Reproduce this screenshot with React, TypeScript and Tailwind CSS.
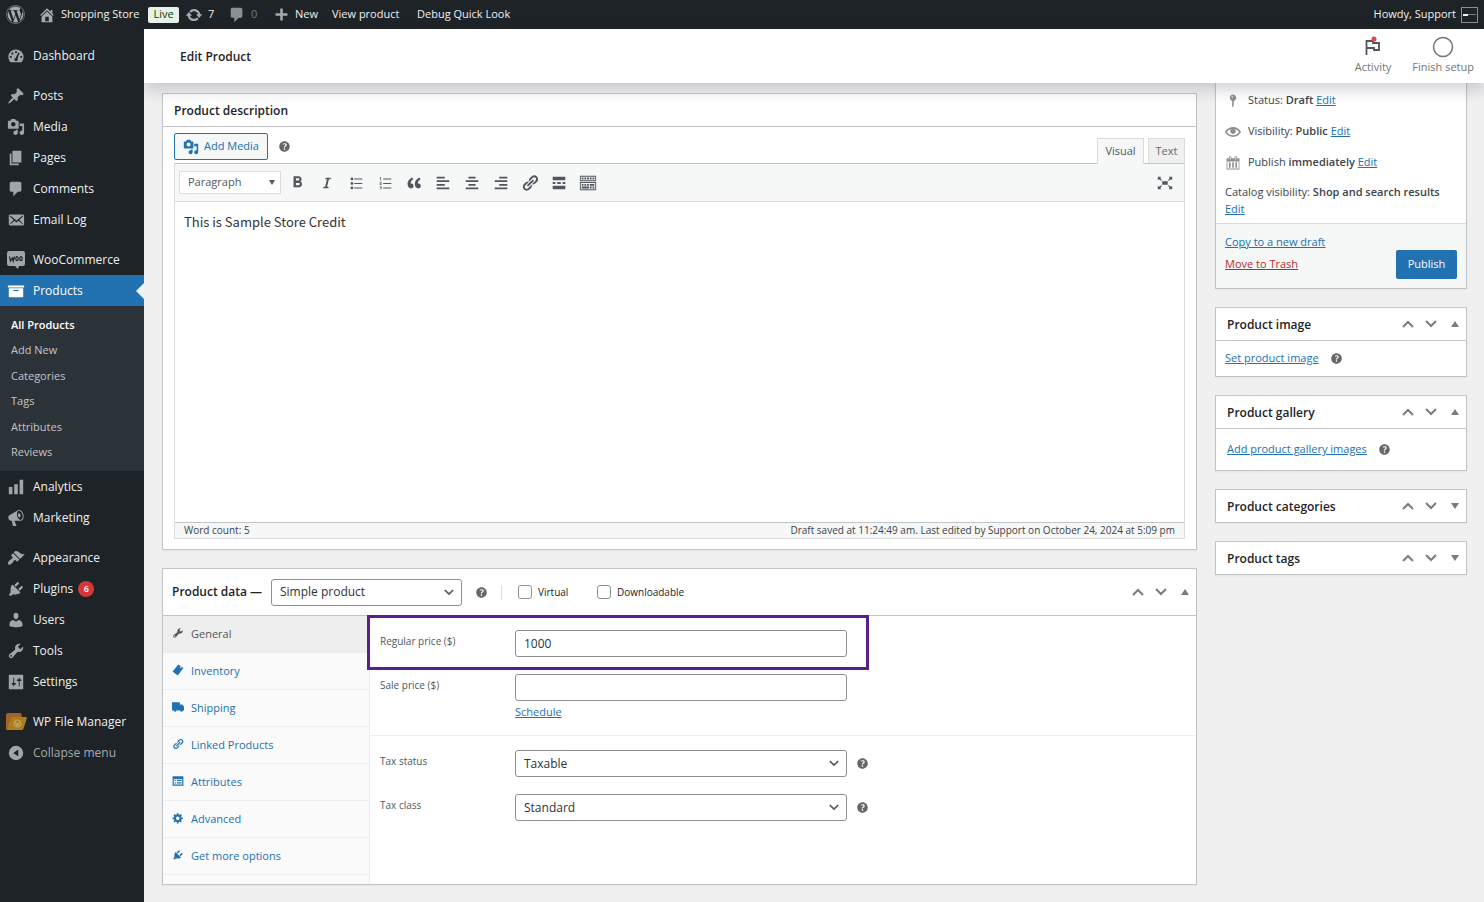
// App.tsx
import { FC, ReactNode, useState } from "react";
import clsx from "clsx";
import { FaWordpress, FaItalic } from "react-icons/fa";
import { MdFormatBold } from "react-icons/md";

const icons = {
  home: "M16 8.5l1.53 1.53-1.06 1.06L10 4.6l-6.47 6.49-1.06-1.06L10 2.5l4 4v-2h2v4zm-6-2.46l6 5.99V18H4v-5.97zM12 17v-5H8v5h4z",
  update:
    "M10.2 3.28c3.53 0 6.43 2.61 6.92 6h2.08l-3.5 4-3.5-4h2.32c-.45-1.97-2.21-3.45-4.32-3.45-1.45 0-2.73.71-3.54 1.78L4.95 5.66C6.23 4.2 8.11 3.28 10.2 3.28zm-.4 13.44c-3.52 0-6.43-2.61-6.92-6H.8l3.5-4c1.17 1.33 2.33 2.67 3.5 4H5.48c.45 1.97 2.21 3.45 4.32 3.45 1.45 0 2.73-.71 3.54-1.78l1.71 1.95c-1.28 1.46-3.15 2.38-5.25 2.38z",
  plus: "M17 8.5v3h-5.5V17h-3v-5.5H3v-3h5.5V3h3v5.5H17z",
  dashboard:
    "M3.76 17h12.48c1.34-1.67 2.21-3.84 2.21-6.1C18.45 6.21 14.67 2.8 10 2.8S1.55 6.21 1.55 10.9c0 2.26.87 4.43 2.21 6.1zM9 4.6h2v2H9zM5 6.2h2v2H5zM3.2 10h2v2h-2zM14.8 10h2v2h-2zM12.6 6l1.3.6-2.2 6.2c.5.9.2 2.2-.8 2.7-1.1.5-2.3 0-2.6-1.1-.3-1.1.3-2.1 1.3-2.3z",
  post: "M10.44 3.02l1.82-1.82 6.36 6.35-1.83 1.82c-1.05-.68-2.48-.57-3.41.36l-.75.75c-.92.93-1.04 2.35-.35 3.41l-1.83 1.82-2.41-2.41-2.8 2.79c-.42.42-3.38 2.71-3.8 2.29s1.86-3.39 2.28-3.81l2.79-2.79L4.1 9.36l1.83-1.82c1.05.69 2.48.57 3.4-.36l.75-.75c.93-.92 1.05-2.35.36-3.41z",
  media:
    "M13 11V4c0-.55-.45-1-1-1h-1.67L9 1H5L3.67 3H2c-.55 0-1 .45-1 1v7c0 .55.45 1 1 1h10c.55 0 1-.45 1-1zM7 4.5c1.38 0 2.5 1.12 2.5 2.5S8.38 9.5 7 9.5 4.5 8.38 4.5 7 5.62 4.5 7 4.5zM14 6h5v10.5c0 1.38-1.12 2.5-2.5 2.5S14 17.88 14 16.5s1.12-2.5 2.5-2.5c.17 0 .34.02.5.05V9h-3V6zm-4 8.05V13h2v3.5c0 1.38-1.12 2.5-2.5 2.5S7 17.88 7 16.5 8.12 14 9.5 14c.17 0 .34.02.5.05z",
  page: "M6 15V2h10v13H6zm-1 1h8v2H3V5h2v11z",
  comment:
    "M5 2h9c1.1 0 2 .9 2 2v7c0 1.1-.9 2-2 2h-2l-5 5v-5H5c-1.1 0-2-.9-2-2V4c0-1.1.9-2 2-2z",
  email:
    "M19 14.5v-9c0-.83-.67-1.5-1.5-1.5H3.49c-.83 0-1.5.67-1.5 1.5v9c0 .83.67 1.5 1.5 1.5H17.5c.83 0 1.5-.67 1.5-1.5zm-1.31-9.11c.33.33.15.67-.03.84L13.6 9.95l3.9 4.06c.12.14.2.36.06.51-.13.16-.43.15-.56.05l-4.37-3.73-2.14 1.95-2.13-1.95-4.37 3.73c-.13.1-.43.11-.56-.05-.14-.15-.06-.37.06-.51l3.9-4.06-4.06-3.72c-.18-.17-.36-.51-.03-.84s.67-.17.95.07l6.24 5.04 6.25-5.04c.28-.24.62-.4.95-.07z",
  archive: "M19 4v2H1V4h18zM2 7h16v10H2V7zm11 3V9H7v1h6z",
  chart: "M18 18V2h-4v16h4zm-6 0V7H8v11h4zm-6 0v-8H2v8h4z",
  megaphone:
    "M18.15 5.94c.46 1.62.38 3.22-.02 4.48-.42 1.28-1.26 2.18-2.3 2.48-.16.06-.26.06-.4.06-.06.02-.12.02-.18.02-.06.02-.14.02-.22.02h-6.8l2.22 5.5c.02.14-.06.26-.14.34-.08.1-.24.16-.34.16H6.95c-.1 0-.26-.06-.34-.16-.08-.08-.16-.2-.14-.34l-1-5.5H4.25l-.02-.02c-.5.06-1.08-.18-1.54-.62s-.88-1.08-1.06-1.88c-.24-.8-.2-1.56-.02-2.2.18-.62.58-1.08 1.06-1.3l.02-.02 9-5.4c.1-.06.18-.1.24-.16.06-.04.14-.08.24-.12.16-.08.28-.12.5-.18 1.04-.3 2.24.1 3.22.98s1.84 2.24 2.26 3.86zm-2.58 5.98h-.02c.4-.1.74-.34 1.04-.7.58-.7.86-1.76.86-3.04 0-.64-.1-1.3-.28-1.98-.34-1.36-1.02-2.5-1.78-3.24s-1.68-1.1-2.46-.88c-.82.22-1.4.96-1.7 2-.32 1.04-.28 2.36.06 3.72.38 1.36 1 2.5 1.8 3.24.78.74 1.62 1.1 2.48.88zm-2.54-7.08c.22-.04.42-.02.62.04.38.16.76.48 1.02 1s.42 1.2.42 1.78c0 .3-.04.56-.12.8-.18.48-.44.84-.86.94-.34.1-.8-.06-1.14-.4s-.64-.86-.78-1.5c-.18-.62-.12-1.24.02-1.72s.48-.84.82-.94z",
  appearance:
    "M14.48 11.06L7.41 3.99l1.5-1.5c.5-.56 2.3-.47 3.51.32 1.21.8 1.43 1.28 2.91 2.1 1.18.64 2.45 1.26 4.45.85zm-.71.71L6.7 4.7 4.93 6.47c-.39.39-.39 1.02 0 1.41l1.06 1.06c.39.39.39 1.03 0 1.42-.6.6-1.43 1.11-2.21 1.69-.35.26-.7.53-1.01.84C1.43 14.23.4 16.08 1.4 17.07c.99 1 2.84-.03 4.18-1.36.31-.31.58-.66.85-1.02.57-.78 1.08-1.61 1.69-2.21.39-.39 1.02-.39 1.41 0l1.06 1.06c.39.39 1.02.39 1.41 0z",
  plugins:
    "M13.11 4.36L9.87 7.6 8 5.73l3.24-3.24c.35-.34 1.05-.2 1.56.32.52.51.66 1.21.31 1.55zm-8 1.77l.91-1.12 9.01 9.01-1.19.84c-.71.71-2.63 1.16-3.82 1.16H6.14L4.9 17.26c-.59.59-1.54.59-2.12 0-.59-.58-.59-1.53 0-2.12l1.24-1.24v-3.88c0-1.13.4-3.19 1.09-3.89zm7.26 3.97l3.24-3.24c.34-.35 1.04-.21 1.55.31.52.51.66 1.21.31 1.55l-3.24 3.25z",
  users:
    "M10 9.25c-2.27 0-2.73-3.44-2.73-3.44C7 4.02 7.82 2 9.97 2c2.16 0 2.98 2.02 2.71 3.81 0 0-.41 3.44-2.68 3.44zm0 2.57L12.72 10c2.39 0 4.52 2.33 4.52 4.53v2.49s-3.65 1.13-7.24 1.13c-3.65 0-7.24-1.13-7.24-1.13v-2.49c0-2.25 1.94-4.48 4.47-4.48z",
  tools:
    "M16.68 9.77c-1.34 1.34-3.3 1.67-4.95.99l-5.41 6.52c-.99.99-2.59.99-3.58 0s-.99-2.59 0-3.57l6.52-5.42c-.68-1.65-.35-3.61.99-4.95 1.28-1.28 3.12-1.62 4.72-1.06l-2.89 2.89 2.82 2.82 2.86-2.87c.53 1.58.18 3.39-1.08 4.65zM3.81 16.21c.4.39 1.04.39 1.43 0 .4-.4.4-1.04 0-1.43-.39-.4-1.03-.4-1.43 0-.39.39-.39 1.03 0 1.43z",
  settings:
    "M18 18V2H2v16h16zM8 11h1c.55 0 1 .45 1 1s-.45 1-1 1H8v1.5c0 .28-.22.5-.5.5s-.5-.22-.5-.5V13H6c-.55 0-1-.45-1-1s.45-1 1-1h1V5.5c0-.28.22-.5.5-.5s.5.22.5.5V11zm5-2h-1c-.55 0-1-.45-1-1s.45-1 1-1h1V5.5c0-.28.22-.5.5-.5s.5.22.5.5V7h1c.55 0 1 .45 1 1s-.45 1-1 1h-1v5.5c0 .28-.22.5-.5.5s-.5-.22-.5-.5V9z",
  collapse: "M10 2a8 8 0 100 16 8 8 0 000-16zM12.5 6v8L7 10z",
  help: "M17 10c0-3.87-3.14-7-7-7-3.87 0-7 3.13-7 7s3.13 7 7 7c3.86 0 7-3.13 7-7zm-6.3 1.48H9.14v-.43c0-.38.08-.7.24-.98s.46-.57.88-.89c.41-.29.68-.53.81-.71.14-.18.2-.39.2-.62 0-.25-.09-.44-.28-.58-.19-.13-.45-.19-.79-.19-.58 0-1.25.19-2 .57l-.64-1.28c.87-.49 1.8-.74 2.77-.74.81 0 1.45.2 1.92.58.48.39.71.91.71 1.55 0 .43-.09.8-.29 1.11-.19.32-.57.67-1.11 1.06-.38.28-.61.49-.71.63-.1.15-.15.34-.15.57v.35zm-1.47 2.74c-.18-.17-.27-.42-.27-.73 0-.33.08-.58.26-.75s.43-.25.77-.25c.32 0 .57.09.75.26s.27.42.27.74c0 .3-.09.55-.27.72-.18.18-.43.27-.75.27-.33 0-.58-.09-.76-.26z",
  link: "M17.74 2.76c1.68 1.69 1.68 4.41 0 6.1l-1.53 1.52c-1.12 1.12-2.7 1.47-4.14 1.09l2.62-2.61.76-.77.76-.76c.84-.84.84-2.2 0-3.04-.84-.85-2.2-.85-3.04 0l-.77.76-3.38 3.38c-.37-1.44-.02-3.02 1.1-4.14l1.52-1.53c1.69-1.68 4.42-1.68 6.1 0zM8.59 13.43l5.34-5.34c.42-.42.42-1.1 0-1.52-.44-.43-1.13-.39-1.53 0l-5.33 5.34c-.42.42-.42 1.1 0 1.52.44.43 1.13.39 1.52 0zm-.76 2.29l4.14-4.15c.38 1.44.03 3.02-1.09 4.14l-1.52 1.53c-1.69 1.68-4.41 1.68-6.1 0-1.68-1.68-1.68-4.42 0-6.1l1.53-1.52c1.12-1.12 2.7-1.47 4.14-1.1l-4.14 4.15c-.85.84-.85 2.2 0 3.05.84.84 2.2.84 3.04 0z",
  ul: "M5.5 7C4.67 7 4 6.33 4 5.5 4 4.68 4.67 4 5.5 4 6.32 4 7 4.68 7 5.5 7 6.33 6.32 7 5.5 7zM8 5h9v1H8V5zm-2.5 7c-.83 0-1.5-.67-1.5-1.5C4 9.68 4.67 9 5.5 9c.82 0 1.5.68 1.5 1.5 0 .83-.68 1.5-1.5 1.5zM8 10h9v1H8v-1zm-2.5 7c-.83 0-1.5-.67-1.5-1.5 0-.82.67-1.5 1.5-1.5.82 0 1.5.68 1.5 1.5 0 .83-.68 1.5-1.5 1.5zM8 15h9v1H8v-1z",
  ol: "M4.2 3.5h1.3V7H4.7V4.3H4zM8 5h9v1H8zM4 8.5h2.2v1.7l-1.2 1h1.2v.8H4v-1.1l1.4-1.2v-.4H4zM8 10h9v1H8zM4 13.5h2.2V17H4v-.7h1.4v-.8H4.5v-.6h.9v-.7H4zM8 15h9v1H8z",
  quote:
    "M9.49 13.22c0-.74-.2-1.38-.61-1.9-.62-.78-1.83-.88-2.53-.72-.29-1.65 1.11-3.75 2.92-4.65L7.88 4c-2.73 1.3-5.42 4.28-4.96 8.05C3.21 14.43 4.59 16 6.54 16c.85 0 1.56-.25 2.12-.75s.83-1.18.83-2.03zm8.05 0c0-.74-.2-1.38-.61-1.9-.63-.78-1.83-.88-2.53-.72-.29-1.65 1.11-3.75 2.92-4.65L15.93 4c-2.73 1.3-5.41 4.28-4.95 8.05.29 2.38 1.66 3.95 3.61 3.95.85 0 1.56-.25 2.12-.75s.83-1.18.83-2.03z",
  alignLeft: "M12 5V3H3v2h9zm5 4V7H3v2h14zm-5 4v-2H3v2h9zm5 4v-2H3v2h14z",
  alignCenter: "M14 5V3H6v2h8zm3 4V7H3v2h14zm-3 4v-2H6v2h8zm3 4v-2H3v2h14z",
  alignRight: "M17 5V3H8v2h9zm0 4V7H3v2h14zm0 4v-2H8v2h9zm0 4v-2H3v2h14z",
  more: "M17 7V3H3v4h14zM6 11V9H3v2h3zm6 0V9H8v2h4zm5 0V9h-3v2h3zm0 6v-4H3v4h14z",
  kitchensink:
    "M19 2v6H1V2h18zm-1 5V3H2v4h16zM5 4v2H3V4h2zm3 0v2H6V4h2zm3 0v2H9V4h2zm3 0v2h-2V4h2zm3 0v2h-2V4h2zm2 5v9H1V9h18zm-1 8v-7H2v7h16zM5 11v2H3v-2h2zm3 0v2H6v-2h2zm3 0v2H9v-2h2zm6 0v2h-5v-2h5zm-6 3v2H3v-2h8zm3 0v2h-2v-2h2zm3 0v2h-2v-2h2z",
  expand:
    "M7 8h6v4H7zm-5 5v4h4l-1.2-1.2L7 12l-3.8 2.2M14 17h4v-4l-1.2 1.2L13 12l2.2 3.8M14 3l1.3 1.3L13 8l3.8-2.2L18 7V3M6 3H2v4l1.2-1.2L7 8 4.7 4.3",
  pin: "M14 6c0 1.86-1.28 3.41-3 3.86V16c0 1-2 2-2 2V9.86C7.28 9.41 6 7.86 6 6c0-2.21 1.79-4 4-4s4 1.79 4 4zM8 5c0 .55.45 1 1 1s1-.45 1-1-.45-1-1-1-1 .45-1 1z",
  eye: "M19.7 9.4C17.7 6 14 3.9 10 3.9S2.3 6 .3 9.4L0 10l.3.6c2 3.4 5.7 5.5 9.7 5.5s7.7-2.1 9.7-5.5l.3-.6-.3-.6zM10 14.1c-3.1 0-6-1.6-7.7-4.1C3.6 8 5.7 6.6 8 6.1c-.9.6-1.5 1.7-1.5 2.9 0 1.9 1.6 3.5 3.5 3.5s3.5-1.6 3.5-3.5c0-1.2-.6-2.3-1.5-2.9 2.3.5 4.4 1.9 5.7 3.9-1.7 2.5-4.6 4.1-7.7 4.1z",
  calendar:
    "M15 4h3v14H2V4h3V3c0-.83.67-1.5 1.5-1.5S8 2.17 8 3v1h4V3c0-.83.67-1.5 1.5-1.5S15 2.17 15 3v1zM6 3v2.5c0 .28.22.5.5.5s.5-.22.5-.5V3c0-.28-.22-.5-.5-.5S6 2.72 6 3zm7 0v2.5c0 .28.22.5.5.5s.5-.22.5-.5V3c0-.28-.22-.5-.5-.5s-.5.22-.5.5zm4 14V8H3v9h14zM7 16V9H5v7h2zm4 0V9H9v7h2zm4 0V9h-2v7h2z",
  tag: "M10.5 1L19 6.500 9.500 19 1 12.500zM14.500 4.200a1.200 1.200 0 100 2.400 1.200 1.200 0 000-2.400z",
  truck: "M0 2h13v4h4l3 3v7h-2a2 2 0 01-4 0H7a2 2 0 01-4 0H0z",
  list: "M1 2h18v16H1zM3 6.5V16h14V6.500zM4.500 8h2v2h-2zM8 8h8v2H8zM4.500 12h2v2h-2zM8 12h8v2H8z",
  gear: "M18 12h-2.18c-.17.7-.44 1.35-.81 1.93l1.54 1.54-2.1 2.1-1.54-1.54c-.58.36-1.23.63-1.91.79V19H8v-2.18c-.68-.16-1.33-.43-1.91-.79l-1.54 1.54-2.12-2.12 1.54-1.54c-.36-.58-.63-1.23-.79-1.91H1V9.03h2.17c.16-.7.44-1.35.8-1.94L2.43 5.55l2.1-2.1 1.54 1.54c.58-.37 1.24-.64 1.93-.81V2h3v2.18c.68.16 1.33.43 1.91.79l1.54-1.54 2.12 2.12-1.54 1.54c.36.59.64 1.24.8 1.94H18V12zm-8.5 1.5c1.66 0 3-1.34 3-3s-1.34-3-3-3-3 1.34-3 3 1.34 3 3 3z",
};

type IconName = keyof typeof icons;

const Icon: FC<{ name: IconName; className?: string }> = ({
  name,
  className = "size-[18px]",
}) => (
  <svg
    viewBox="0 0 20 20"
    fill="currentColor"
    fillRule="evenodd"
    aria-hidden="true"
    className={clsx("shrink-0", className)}
  >
    <path d={icons[name]} />
  </svg>
);

const Help: FC = () => (
  <button type="button" aria-label="Help" className="text-[#666]">
    <Icon name="help" className="size-[15px]" />
  </button>
);

const Chevron: FC<{ down?: boolean; className?: string }> = ({
  down,
  className,
}) => (
  <svg
    viewBox="0 0 12 8"
    fill="none"
    stroke="currentColor"
    strokeWidth="2"
    aria-hidden="true"
    className={className}
  >
    <path d={down ? "M1 1l5 5 5-5" : "M1 7l5-5 5 5"} />
  </svg>
);

// Move up / move down / toggle controls of a postbox
const BoxActions: FC<{ open?: boolean }> = ({ open = true }) => (
  <div className="flex items-center pr-[7px] text-[#787c82]">
    <button type="button" aria-label="Move up" className="px-[5px]">
      <Chevron className="w-3 h-2" />
    </button>
    <button type="button" aria-label="Move down" className="px-[6px]">
      <Chevron down className="w-3 h-2" />
    </button>
    <button type="button" aria-label="Toggle panel" className="pl-2">
      <svg viewBox="0 0 8 6" fill="currentColor" className="w-2 h-[6px]">
        <path d={open ? "M4 0l4 6H0z" : "M0 0h8L4 6z"} />
      </svg>
    </button>
  </div>
);

const SideBox: FC<{ title: string; children?: ReactNode }> = ({
  title,
  children,
}) => (
  <section className="bg-white border border-[#c3c4c7] shadow-xs">
    <div className="flex items-center justify-between h-8 pl-[11px]">
      <h2 className="pt-[2px] text-xs font-semibold text-[#1d2327]">{title}</h2>
      <BoxActions open={!!children} />
    </div>
    {children && (
      <div className="flex items-center border-t border-[#c3c4c7] text-[11px]">
        {children}
      </div>
    )}
  </section>
);

interface MenuEntry {
  label: string;
  icon: IconName | "woo" | "files";
  badge?: string;
}

const menuGroups: MenuEntry[][] = [
  [{ label: "Dashboard", icon: "dashboard" }],
  [
    { label: "Posts", icon: "post" },
    { label: "Media", icon: "media" },
    { label: "Pages", icon: "page" },
    { label: "Comments", icon: "comment" },
    { label: "Email Log", icon: "email" },
  ],
  [
    { label: "WooCommerce", icon: "woo" },
    { label: "Products", icon: "archive" },
    { label: "Analytics", icon: "chart" },
    { label: "Marketing", icon: "megaphone" },
  ],
  [
    { label: "Appearance", icon: "appearance" },
    { label: "Plugins", icon: "plugins", badge: "6" },
    { label: "Users", icon: "users" },
    { label: "Tools", icon: "tools" },
    { label: "Settings", icon: "settings" },
  ],
  [
    { label: "WP File Manager", icon: "files" },
    { label: "Collapse menu", icon: "collapse" },
  ],
];

const productLinks = [
  "All Products",
  "Add New",
  "Categories",
  "Tags",
  "Attributes",
  "Reviews",
];

const MenuIcon: FC<{ icon: MenuEntry["icon"] }> = ({ icon }) => {
  if (icon === "woo")
    return (
      <svg viewBox="0 0 18 18" className="size-[18px]" aria-hidden="true">
        <path
          d="M2 0h14a2 2 0 012 2v11a2 2 0 01-2 2h-4l-1 3-3-3H2a2 2 0 01-2-2V2a2 2 0 012-2z"
          fill="currentColor"
        />
        <g fill="none" stroke="#1d2327" strokeWidth="1.2">
          <path d="M2.500 5.500l1 4.500 2-3 .7 3 1.300-4.500" />
          <ellipse cx="10" cy="7.700" rx="1.200" ry="2" />
          <ellipse cx="14" cy="7.700" rx="1.200" ry="2" />
        </g>
      </svg>
    );
  if (icon === "files")
    return (
      <svg viewBox="0 0 21 17" className="w-[21px] h-[17px]" aria-hidden="true">
        <path d="M0 2a2 2 0 012-2h13l1 4v13H1a1 1 0 01-1-1z" fill="#a3622a" />
        <path d="M5 4h15q1.300 0 .8 1.500l-3.200 10Q17 17 15.500 17H1z" fill="#b07d1e" />
        <circle cx="11.500" cy="10.500" r="3.500" fill="none" stroke="#c9ab6c" />
        <path
          d="M9.500 9l1.200 3.500.8-2.500.8 2.500L13.500 9"
          fill="none"
          stroke="#c9ab6c"
        />
      </svg>
    );
  return <Icon name={icon} />;
};

const MenuItem: FC<{ item: MenuEntry }> = ({ item }) => {
  const active = item.label === "Products";
  const muted = item.label === "Collapse menu";
  return (
    <li>
      <a
        href="#"
        className={clsx(
          "relative flex items-center h-[31px] text-xs",
          active && "bg-[#2271b1] text-white",
          muted ? "text-[#a7aaad]" : "text-[#f0f0f1]"
        )}
      >
        <span
          className={clsx(
            "w-[33px] pr-px flex justify-center",
            active ? "text-white" : "text-[#a0a5aa]"
          )}
        >
          <MenuIcon icon={item.icon} />
        </span>
        {item.label}
        {item.badge && (
          <span className="ml-[5px] size-4 rounded-full bg-[#d63638] text-white text-[9px] font-semibold flex items-center justify-center">
            {item.badge}
          </span>
        )}
        {active && (
          <span className="absolute right-0 border-y-8 border-y-transparent border-r-8 border-r-[#f0f0f1]" />
        )}
      </a>
      {active && (
        <ul className="flex flex-col h-[165px] py-[6px] bg-[#2c3338] text-[11px] text-[#c3c4c7]">
          {productLinks.map((link, i) => (
            <li key={link} className="flex-1 flex items-center pl-[11px]">
              <a href="#" className={clsx(i === 0 && "font-semibold text-white")}>
                {link}
              </a>
            </li>
          ))}
        </ul>
      )}
    </li>
  );
};

const AdminBar: FC = () => (
  <header className="flex items-center h-[29px] bg-[#1d2327] text-[#f0f0f1] text-[11px] px-[6px]">
    <a href="#" aria-label="About WordPress" className="text-[#a7aaad]">
      <FaWordpress className="size-[19px]" />
    </a>
    <a href="#" className="ml-[13px] flex items-center gap-[5px]">
      <Icon name="home" className="size-[18px] text-[#a7aaad]" />
      <span className="w-[83px] whitespace-nowrap">Shopping Store</span>
    </a>
    <a
      href="#"
      className="ml-1 w-[31px] h-4 rounded-xs bg-[#e6f2e8] text-[#00450c] flex items-center justify-center"
    >
      Live
    </a>
    <a href="#" className="ml-[6px] w-[43px] flex items-center gap-[5px]">
      <Icon name="update" className="size-[18px] text-[#a7aaad]" />7
    </a>
    <a href="#" className="w-[45px] flex items-center gap-[5px] text-[#787c82]">
      <Icon name="comment" className="size-[18px] text-[#8c8f94]" />0
    </a>
    <a href="#" className="w-[59px] flex items-center gap-[5px]">
      <Icon name="plus" className="size-[17px] text-[#a7aaad]" />
      New
    </a>
    <a href="#" className="w-[85px] whitespace-nowrap">
      View product
    </a>
    <a href="#" className="whitespace-nowrap">
      Debug Quick Look
    </a>
    <a href="#" className="ml-auto flex items-center gap-[5px]">
      Howdy, Support
      <span className="w-[17px] h-4 border border-[#8c8f94] flex items-center px-px">
        <span className="w-[5px] h-[2px] bg-[#f0f0f1]" />
        <span className="flex-1 h-px bg-[#787c82]" />
      </span>
    </a>
  </header>
);

const tools: { label: string; icon: ReactNode }[] = [
  { label: "Bold", icon: <MdFormatBold className="size-[19px]" /> },
  { label: "Italic", icon: <FaItalic className="size-3" /> },
  { label: "Bulleted list", icon: <Icon name="ul" /> },
  { label: "Numbered list", icon: <Icon name="ol" /> },
  { label: "Blockquote", icon: <Icon name="quote" /> },
  { label: "Align left", icon: <Icon name="alignLeft" /> },
  { label: "Align center", icon: <Icon name="alignCenter" /> },
  { label: "Align right", icon: <Icon name="alignRight" /> },
  { label: "Insert link", icon: <Icon name="link" /> },
  { label: "Read more", icon: <Icon name="more" /> },
  { label: "Toolbar toggle", icon: <Icon name="kitchensink" /> },
];

const DescriptionBox: FC = () => {
  const [text, setText] = useState("This is Sample Store Credit");

  return (
    <section className="bg-white border border-[#c3c4c7] shadow-xs">
      <h2 className="h-[33px] pl-[11px] pt-[2px] flex items-center border-b border-[#c3c4c7] text-xs font-semibold text-[#1d2327]">
        Product description
      </h2>
      <div className="px-[11px] pt-[6px] pb-[10px]">
        <div className="flex h-[30px]">
          <button
            type="button"
            className="h-[27px] w-[94px] mr-[9px] flex items-center justify-center gap-[5px] rounded-xs border border-[#2271b1] bg-[#f6f7f7] text-[#2271b1] text-[11px]"
          >
            <Icon name="media" className="size-4" />
            Add Media
          </button>
          <div className="flex items-center h-[27px]">
            <Help />
          </div>
          <div className="ml-auto flex items-end gap-1 text-[11px] text-[#50575e]">
            <button
              type="button"
              className="z-[1] -mb-px h-[26px] w-[47px] border border-b-0 border-[#dcdcde] bg-[#f6f7f7]"
            >
              Visual
            </button>
            <button
              type="button"
              className="h-[25px] w-[37px] border border-b-0 border-[#dcdcde] bg-[#f0f0f1] text-[#646970]"
            >
              Text
            </button>
          </div>
        </div>
        <div className="border border-[#dcdcde] border-t-[#c3c4c7]">
          <div className="flex items-center h-[38px] pl-1 pr-[10px] border-b border-[#dcdcde] bg-[#f6f7f7] text-[#50575e]">
            <div className="relative flex items-center">
              <select
                aria-label="Block format"
                className="appearance-none w-[102px] h-[23px] pl-2 border border-[#dcdcde] bg-white text-[11px]"
              >
                <option>Paragraph</option>
                <option>Heading 1</option>
              </select>
              <svg
                viewBox="0 0 6 5"
                fill="currentColor"
                className="absolute right-[6px] w-[6px] h-[5px] pointer-events-none"
              >
                <path d="M0 0h6L3 5z" />
              </svg>
            </div>
            <div className="flex ml-[2px]">
              {tools.map((tool) => (
                <button
                  key={tool.label}
                  type="button"
                  aria-label={tool.label}
                  className="w-[29px] h-[27px] flex items-center justify-center"
                >
                  {tool.icon}
                </button>
              ))}
            </div>
            <button type="button" aria-label="Fullscreen" className="ml-auto">
              <Icon name="expand" />
            </button>
          </div>
          <textarea
            aria-label="Product description"
            value={text}
            onChange={(e) => setText(e.target.value)}
            className="block w-full h-[320px] resize-none outline-none px-[9px] py-[10px] font-['Noto_Sans_CJK_SC',sans-serif] text-[13px] leading-5 text-[#333]"
          />
          <div className="flex items-center justify-between h-4 px-[9px] border-t border-[#c3c4c7] bg-[#f6f7f7] text-[10px] text-[#3c434a]">
            <span>Word count: 5</span>
            <span>
              Draft saved at 11:24:49 am. Last edited by Support on October 24,
              2024 at 5:09 pm
            </span>
          </div>
        </div>
      </div>
    </section>
  );
};

const dataTabs: { label: string; icon: IconName }[] = [
  { label: "General", icon: "tools" },
  { label: "Inventory", icon: "tag" },
  { label: "Shipping", icon: "truck" },
  { label: "Linked Products", icon: "link" },
  { label: "Attributes", icon: "list" },
  { label: "Advanced", icon: "gear" },
  { label: "Get more options", icon: "plugins" },
];

const SelectField: FC<{
  id: string;
  options: string[];
  className?: string;
}> = ({ id, options, className }) => (
  <div className={clsx("relative flex items-center", className)}>
    <select
      id={id}
      className="appearance-none w-full h-[27px] pl-2 rounded-[3px] border border-[#8c8f94] bg-white text-xs text-[#2c3338]"
    >
      {options.map((option) => (
        <option key={option}>{option}</option>
      ))}
    </select>
    <Chevron
      down
      className="absolute right-2 w-[10px] h-[7px] text-[#50575e] pointer-events-none"
    />
  </div>
);

const fieldLabel = "w-[135px] h-[22px] flex items-center text-[10px] text-[#50575e]";
const textInput =
  "w-[332px] h-[27px] px-2 rounded-[3px] border border-[#8c8f94] bg-white text-xs text-[#2c3338]";

const ProductDataBox: FC = () => {
  const [regularPrice, setRegularPrice] = useState("1000");
  const [salePrice, setSalePrice] = useState("");

  return (
    <section className="bg-white border border-[#c3c4c7] shadow-xs">
      <div className="flex items-center h-[47px] pl-[9px] border-b border-[#c3c4c7] text-[#1d2327]">
        <h2 className="w-[99px] whitespace-nowrap text-xs font-semibold">
          <label htmlFor="product-type">Product data —</label>
        </h2>
        <SelectField
          id="product-type"
          options={["Simple product", "Grouped product", "Variable product"]}
          className="w-[191px]"
        />
        <div className="ml-3 flex">
          <Help />
        </div>
        <label className="ml-3 pl-4 h-[15px] w-[96px] border-l border-[#dcdcde] flex items-center gap-[6px] text-[10px] font-medium">
          <input
            type="checkbox"
            className="appearance-none size-[14px] rounded-[3px] border border-[#8c8f94] bg-white"
          />
          Virtual
        </label>
        <label className="flex items-center gap-[6px] text-[10px] font-medium">
          <input
            type="checkbox"
            className="appearance-none size-[14px] rounded-[3px] border border-[#8c8f94] bg-white"
          />
          Downloadable
        </label>
        <div className="ml-auto">
          <BoxActions />
        </div>
      </div>
      <div className="flex h-[268px]">
        <ul className="w-[207px] shrink-0 border-r border-[#eee] bg-[#fafafa] text-[11px]">
          {dataTabs.map((tab, i) => (
            <li key={tab.label}>
              <a
                href="#"
                className={clsx(
                  "flex items-center gap-[7px] h-[37px] pl-[9px] border-b border-[#eee]",
                  i === 0 ? "bg-[#eee] text-[#555]" : "text-[#2271b1]"
                )}
              >
                <Icon name={tab.icon} className="size-3 mb-[3px]" />
                {tab.label}
              </a>
            </li>
          ))}
        </ul>
        <div className="relative flex-1">
          <div className="h-[120px] pt-[14px] pl-[10px] border-b border-[#eee]">
            <div className="flex mb-[17px]">
              <label htmlFor="regular-price" className={fieldLabel}>
                Regular price ($)
              </label>
              <input
                id="regular-price"
                type="text"
                value={regularPrice}
                onChange={(e) => setRegularPrice(e.target.value)}
                className={textInput}
              />
            </div>
            <div className="flex">
              <label htmlFor="sale-price" className={fieldLabel}>
                Sale price ($)
              </label>
              <div>
                <input
                  id="sale-price"
                  type="text"
                  value={salePrice}
                  onChange={(e) => setSalePrice(e.target.value)}
                  className={clsx("block", textInput)}
                />
                <a
                  href="#"
                  className="block mt-[3px] text-[11px] leading-4 underline text-[#2271b1]"
                >
                  Schedule
                </a>
              </div>
            </div>
          </div>
          <div className="pt-[14px] pl-[10px] flex flex-col gap-[17px]">
            <div className="flex">
              <label htmlFor="tax-status" className={fieldLabel}>
                Tax status
              </label>
              <SelectField
                id="tax-status"
                options={["Taxable", "Shipping only", "None"]}
                className="w-[332px] mr-2"
              />
              <Help />
            </div>
            <div className="flex">
              <label htmlFor="tax-class" className={fieldLabel}>
                Tax class
              </label>
              <SelectField
                id="tax-class"
                options={["Standard", "Reduced rate", "Zero rate"]}
                className="w-[332px] mr-2"
              />
              <Help />
            </div>
          </div>
          {/* Highlight around the regular price field */}
          <div className="absolute -left-[3px] -top-px w-[502px] h-[55px] border-3 border-[#5b1f8a] pointer-events-none" />
        </div>
      </div>
    </section>
  );
};

const EditLink: FC = () => (
  <a href="#" className="underline text-[#2271b1]">
    Edit
  </a>
);

const statusRows: { icon: IconName; label: string; value: string }[] = [
  { icon: "pin", label: "Status:", value: "Draft" },
  { icon: "eye", label: "Visibility:", value: "Public" },
  { icon: "calendar", label: "Publish", value: "immediately" },
];

const PublishBox: FC = () => (
  <section className="bg-white border border-t-0 border-[#c3c4c7] shadow-xs text-[11px] text-[#3c434a]">
    <div className="pt-[2px] px-[9px]">
      {statusRows.map((row) => (
        <p key={row.label} className="flex items-center h-[31px]">
          <Icon name={row.icon} className="size-4 mr-[7px] text-[#8c8f94]" />
          <span>
            {row.label} <b className="font-semibold">{row.value}</b>{" "}
            <EditLink />
          </span>
        </p>
      ))}
      <p className="pt-[5px] pb-[6px] leading-[17px]">
        Catalog visibility:{" "}
        <b className="font-semibold">Shop and search results</b>
        <br />
        <EditLink />
      </p>
    </div>
    <div className="flex items-end justify-between h-[65px] px-[9px] pb-[9px] border-t border-[#dcdcde] bg-[#f6f7f7]">
      <div className="flex flex-col h-full pt-[7px] leading-[22px] underline">
        <a href="#" className="text-[#2271b1]">
          Copy to a new draft
        </a>
        <a href="#" className="text-[#b32d2e]">
          Move to Trash
        </a>
      </div>
      <button
        type="submit"
        className="w-[61px] h-[29px] rounded-xs bg-[#2271b1] text-white"
      >
        Publish
      </button>
    </div>
  </section>
);

const App: FC = () => (
  <div className="min-h-screen flex flex-col bg-[#f0f0f1] font-['Open_Sans',sans-serif]">
    <AdminBar />
    <div className="flex flex-1">
      <nav className="relative z-20 w-36 shrink-0 pt-[11px] flex flex-col gap-[9px] bg-[#1d2327]">
        {menuGroups.map((group) => (
          <ul key={group[0].label}>
            {group.map((item) => (
              <MenuItem key={item.label} item={item} />
            ))}
          </ul>
        ))}
      </nav>
      <div className="flex-1 min-w-0">
        <div className="relative z-10 flex items-center justify-between h-[54px] pl-9 pr-[10px] bg-white shadow-[0_7px_14px_rgba(60,60,90,0.22)]">
          <h1 className="pt-[2px] text-xs font-semibold text-[#1d2327]">
            Edit Product
          </h1>
          <div className="flex gap-[21px] text-[11px] leading-[18px] text-[#757575]">
            <button type="button" className="flex flex-col items-center">
              <svg viewBox="0 0 22 22" fill="none" className="size-[22px]">
                <path
                  d="M4.500 19V5H11v2h6v7h-5v-2H5"
                  stroke="#50575e"
                  strokeWidth="1.800"
                />
                <circle cx="12" cy="3" r="2.500" fill="#e0454a" />
              </svg>
              Activity
            </button>
            <button type="button" className="flex flex-col items-center">
              <svg viewBox="0 0 22 22" fill="none" className="size-[22px]">
                <circle cx="11" cy="11" r="9.500" stroke="#757575" strokeWidth="1.500" />
              </svg>
              Finish setup
            </button>
          </div>
        </div>
        <main className="flex gap-[18px] pl-[18px] pr-[17px]">
          <div className="flex-1 min-w-0 pt-[10px] flex flex-col gap-[18px]">
            <DescriptionBox />
            <ProductDataBox />
          </div>
          <aside className="w-[252px] shrink-0 flex flex-col gap-[18px]">
            <PublishBox />
            <SideBox title="Product image">
              <div className="flex items-center gap-[10px] h-[35px] pl-[9px]">
                <a href="#" className="underline text-[#2271b1]">
                  Set product image
                </a>
                <Help />
              </div>
            </SideBox>
            <SideBox title="Product gallery">
              <div className="flex items-center gap-[10px] h-[41px] pl-[11px]">
                <a href="#" className="underline text-[#2271b1]">
                  Add product gallery images
                </a>
                <Help />
              </div>
            </SideBox>
            <SideBox title="Product categories" />
            <SideBox title="Product tags" />
          </aside>
        </main>
      </div>
    </div>
  </div>
);

export default App;
